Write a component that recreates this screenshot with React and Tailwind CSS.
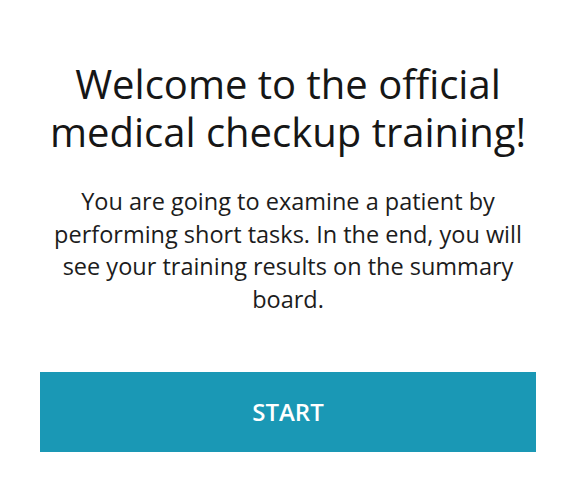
export default function App() {
  return (
    <div className="w-[576px] h-[492px] bg-white flex flex-col items-center px-10 pt-[60px]" style={{ fontFamily: '"Open Sans", sans-serif' }}>
      <h1 className="text-[40px] leading-[48px] text-[#161616] text-center font-normal">
        Welcome to the official
        <br />
        medical checkup training!
      </h1>
      <p className="mt-[29px] text-[23.5px] leading-[32.5px] text-[#1c1c1c] text-center px-[2px]">
        You are going to examine a patient by performing short tasks. In the end, you will see your training results on the summary board.
      </p>
      <button className="mt-[57px] w-full h-[80px] bg-[#1a98b5] text-white text-[24px] font-semibold">
        START
      </button>
    </div>
  );
}
